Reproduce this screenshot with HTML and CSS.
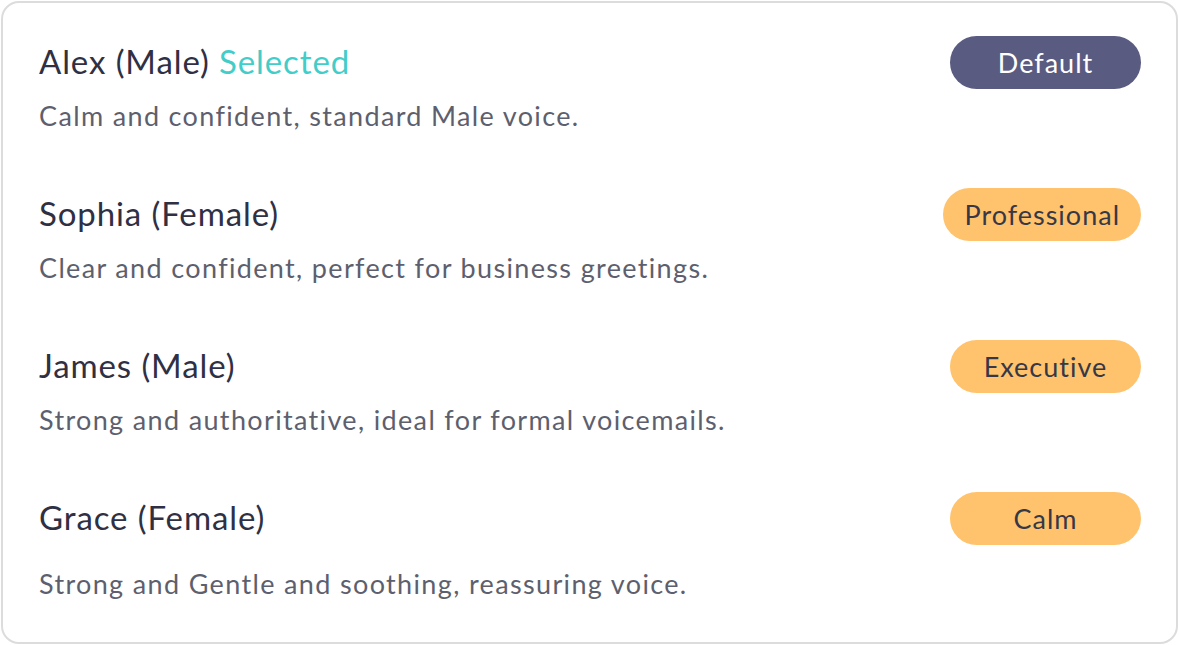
FILE: index.html
```html
<!DOCTYPE html>
<html lang="en">
<head>
<meta charset="utf-8">
<title>Voices</title>
<link rel="stylesheet" href="styles.css">
</head>
<body>
<div class="card">
  <div class="voice">
    <div class="voice-head">
      <div class="voice-name">Alex (Male) <span class="selected">Selected</span></div>
      <span class="pill pill-default">Default</span>
    </div>
    <div class="voice-desc">Calm and confident, standard Male voice.</div>
  </div>
  <div class="voice">
    <div class="voice-head">
      <div class="voice-name">Sophia (Female)</div>
      <span class="pill pill-tag">Professional</span>
    </div>
    <div class="voice-desc">Clear and confident, perfect for business greetings.</div>
  </div>
  <div class="voice">
    <div class="voice-head">
      <div class="voice-name">James (Male)</div>
      <span class="pill pill-tag">Executive</span>
    </div>
    <div class="voice-desc">Strong and authoritative, ideal for formal voicemails.</div>
  </div>
  <div class="voice voice-last">
    <div class="voice-head">
      <div class="voice-name">Grace (Female)</div>
      <span class="pill pill-tag">Calm</span>
    </div>
    <div class="voice-desc">Strong and Gentle and soothing, reassuring voice.</div>
  </div>
</div>
</body>
</html>
```

FILE: styles.css
```css
* { box-sizing: border-box; }
html, body { margin: 0; padding: 0; background: #ffffff; }
body { font-family: "Lato", "Noto Sans", sans-serif; }

.card {
  margin: 1px;
  width: 1177px;
  height: 643px;
  border: 2px solid #dcdcdc;
  border-radius: 18px;
  background: #ffffff;
  padding: 33px 35px 0 36px;
  display: flex;
  flex-direction: column;
}

.voice { padding-bottom: 57px; }

.voice-head {
  display: flex;
  align-items: center;
  justify-content: space-between;
  height: 53px;
}

.voice-name {
  font-size: 33px;
  line-height: 40px;
  padding-bottom: 4px;
  color: #2f3044;
  letter-spacing: 0.9px;
}

.selected { color: #43cdc9; }

.voice-desc {
  margin-top: 12px;
  height: 30px;
  line-height: 30px;
  font-size: 27px;
  color: #5d5f6e;
  letter-spacing: 1.35px;
}

.voice-last .voice-desc { margin-top: 24px; }

.pill {
  display: inline-flex;
  align-items: center;
  justify-content: center;
  min-width: 191px;
  height: 53px;
  padding: 0 21px;
  border-radius: 27px;
  font-size: 27px;
  letter-spacing: 1px;
}

.pill-default { background: #595b81; color: #ffffff; }
.pill-tag { background: #ffc36d; color: #363848; }
```
